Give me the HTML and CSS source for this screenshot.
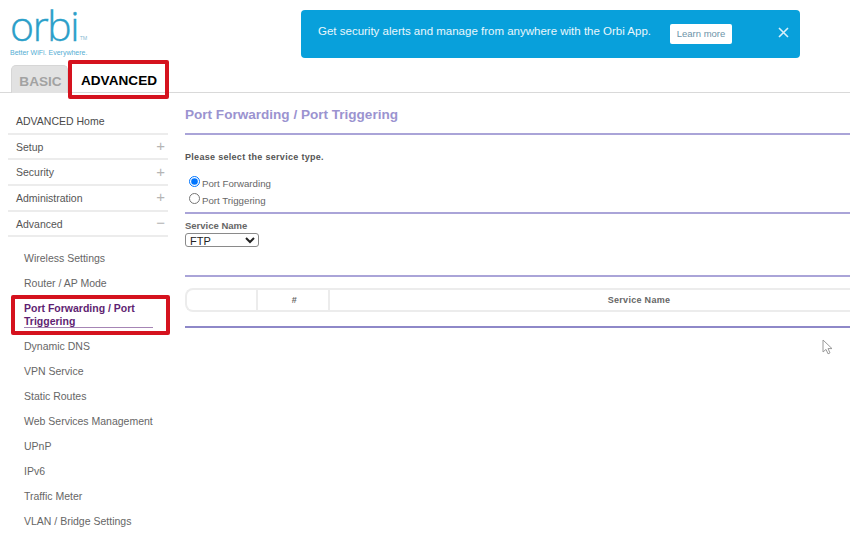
FILE: index.html
```html
<!DOCTYPE html>
<html lang="en">
<head>
<meta charset="utf-8">
<title>Orbi - Port Forwarding</title>
<link rel="stylesheet" href="styles.css">
</head>
<body>
<div class="page">
  <header class="header">
    <div class="brand">
      <div class="logo"><span class="logo-word">orbi</span><span class="tm">TM</span></div>
      <div class="tagline">Better WiFi. Everywhere.</div>
      <div class="tabs">
        <div class="tab tab-basic">BASIC</div>
        <div class="tab tab-advanced">ADVANCED</div>
      </div>
    </div>
    <div class="banner">
      <span class="banner-text">Get security alerts and manage from anywhere with the Orbi App.</span>
      <span class="learn">Learn more</span>
      <svg class="close" width="11" height="11" viewBox="0 0 11 11"><path d="M1 1l9 9M10 1l-9 9" stroke="#d8f0fa" stroke-width="1.6" fill="none"/></svg>
    </div>
  </header>
  <div class="body">
    <nav class="side">
      <div class="row">ADVANCED Home</div>
      <div class="row"><span>Setup</span><span class="sign">+</span></div>
      <div class="row"><span>Security</span><span class="sign">+</span></div>
      <div class="row"><span>Administration</span><span class="sign">+</span></div>
      <div class="row"><span>Advanced</span><span class="sign">−</span></div>
      <ul class="sub">
        <li>Wireless Settings</li>
        <li>Router / AP Mode</li>
        <li class="current"><span class="current-text">Port Forwarding / Port Triggering</span></li>
        <li>Dynamic DNS</li>
        <li>VPN Service</li>
        <li>Static Routes</li>
        <li>Web Services Management</li>
        <li>UPnP</li>
        <li>IPv6</li>
        <li>Traffic Meter</li>
        <li>VLAN / Bridge Settings</li>
      </ul>
    </nav>
    <main class="main">
      <h1 class="title">Port Forwarding / Port Triggering</h1>
      <div class="rule"></div>
      <p class="prompt">Please select the service type.</p>
      <div class="radios">
        <label class="radio"><input type="radio" name="svc" checked><span>Port Forwarding</span></label>
        <label class="radio"><input type="radio" name="svc"><span>Port Triggering</span></label>
      </div>
      <div class="rule"></div>
      <div class="field-label">Service Name</div>
      <select class="select"><option>FTP</option></select>
      <div class="rule rule-low"></div>
      <div class="table">
        <div class="cell cell-a"></div>
        <div class="cell cell-b">#</div>
        <div class="cell cell-c">Service Name</div>
      </div>
      <div class="rule rule-end"></div>
    </main>
  </div>
  <div class="mark mark-tab"></div>
  <div class="mark mark-item"></div>
  <svg class="cursor" width="12" height="16" viewBox="0 0 12 16"><path d="M1 1v12l3-2.6 2 4.4 2-.9-2-4.3h4z" fill="#fff" stroke="#9a9a9a" stroke-width="1"/></svg>
</div>
</body>
</html>
```
FILE: styles.css
```css
* { box-sizing: border-box; }
html, body { margin: 0; padding: 0; background: #fff; }
body { font-family: "Liberation Sans", Arial, sans-serif; color: #555; overflow: hidden; }
.page { position: relative; width: 850px; height: 560px; overflow: hidden; }

.header { display: flex; height: 93px; border-bottom: 1px solid #d9d9d9; }
.brand { width: 301px; padding: 0 0 0 10px; flex: none; }
.logo { display: flex; align-items: flex-start; height: 48px; padding-top: 2px; color: #2b9fc9; font-family: "Open Sans", sans-serif; }
.logo-word { font-weight: 300; font-size: 41px; line-height: 46px; height: 46px; letter-spacing: -1.4px; -webkit-text-stroke: 0.4px #2b9fc9; }
.tm { font-size: 5px; line-height: 6px; font-weight: 400; color: #7fb8d0; margin: 33px 0 0 2px; }
.tagline { font-size: 7px; line-height: 9px; height: 15px; padding-top: 0; color: #55aed3; }
.tabs { display: flex; height: 30px; align-items: flex-end; }
.tab { font-weight: 700; }
.tab-basic { width: 57px; height: 28px; margin-left: 1px; padding-left: 2px; background: #e2e2e2; border: 1px solid #d6d6d6; border-bottom: 0; border-radius: 5px 5px 0 0; color: #a2a2a2; font-size: 13.6px; line-height: 31px; text-align: center; }
.tab-advanced { width: 90px; height: 27px; color: #000; font-size: 13.6px; line-height: 30px; text-align: center; margin-left: 6px; }

.banner { display: flex; align-items: center; width: 499px; height: 48px; margin-top: 10px; background: #08a0db; border-radius: 4px; padding: 0 11px 0 17px; color: #e9f7fc; font-size: 11.5px; }
.banner-text { width: 352px; flex: none; margin-top: -6px; white-space: nowrap; }
.learn { width: 62px; height: 20px; background: #fff; border-radius: 2px; color: #6c93a8; font-size: 9.5px; line-height: 20px; text-align: center; flex: none; }
.close { margin-left: 46px; margin-top: -3px; flex: none; }

.body { display: flex; }
.side { width: 185px; flex: none; padding: 16px 0 0 8px; font-size: 10.5px; }
.row { display: flex; justify-content: space-between; align-items: center; width: 160px; height: 25.7px; padding: 0 3px 0 8px; border-bottom: 2px solid #ececec; color: #555; }
.row:first-child { color: #4a4a4a; }
.sign { font-size: 15px; font-weight: 400; color: #b5b5b5; line-height: 1; margin-top: -2px; }
.sub { list-style: none; margin: 9px 0 0; padding: 0 0 0 16px; width: 160px; color: #666; }
.sub li { line-height: 13px; padding: 6px 0; height: 25px; white-space: nowrap; }
.sub .current { height: 38px; white-space: normal; color: #5f1f72; font-weight: 700; }
.current-text { display: block; width: 129px; border-bottom: 1px solid #a685b5; height: 26px; }

.main { flex: 1; padding: 15px 0 0; min-width: 0; }
.title { margin: 0; font-size: 13.55px; line-height: 14px; font-weight: 700; color: #9b93d0; height: 25px; }
.rule { height: 2px; background: #aaa4d8; }
.prompt { margin: 0; padding-top: 16px; height: 36px; font-size: 9px; line-height: 12px; font-weight: 700; color: #555; letter-spacing: 0.3px; }
.radios { height: 41px; padding-top: 3px; }
.radio { display: flex; align-items: center; height: 17px; margin-left: 4px; font-size: 9.7px; color: #666; }
.radio input { margin: -2px 2px 0 0; width: 11px; height: 11px; }
.radio span { padding-top: 2px; }
.field-label { padding-top: 6px; font-size: 9.5px; line-height: 11px; height: 19px; font-weight: 700; color: #666; }
.select { display: block; width: 74px; height: 14px; padding: 0; font-family: "Liberation Sans", sans-serif; font-size: 11px; background: #fff; border: 1px solid #8a8a8a; border-radius: 3px; color: #222; }
.rule-low { margin-top: 28px; }
.table { display: flex; height: 24px; margin-top: 11px; border: 2px solid #ececec; border-right: 0; border-radius: 8px 0 0 8px; font-size: 9px; font-weight: 700; color: #666; letter-spacing: 0.3px; }
.cell { display: flex; align-items: center; justify-content: center; }
.cell-a { width: 69px; }
.cell-b { width: 72px; padding-left: 3px; border-left: 2px solid #ececec; }
.cell-c { flex: 1; border-left: 2px solid #ececec; padding-left: 98px; }
.rule-end { margin-top: 14px; background: #8e88c8; }

.mark { position: absolute; border: 4px solid #d5121e; border-radius: 2px; pointer-events: none; }
.mark-tab { left: 68px; top: 60px; width: 101px; height: 39px; }
.mark-item { left: 11px; top: 295px; width: 159px; height: 40px; }
.cursor { position: absolute; left: 822px; top: 339px; }
```
